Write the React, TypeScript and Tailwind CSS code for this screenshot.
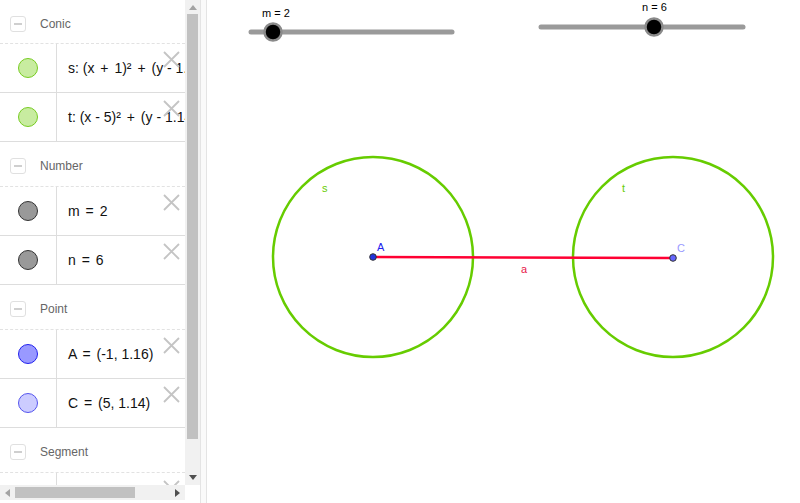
import React from "react";

type Row = { swatch: string; label: React.ReactNode };
type Group = { name: string; rows: Row[] };

// math operators get a bit more room, like the algebra view's formula renderer
const Op = ({ c }: { c: string }) => <span className="mx-[2px]">{c}</span>;

const groups: Group[] = [
  {
    name: "Conic",
    rows: [
      {
        swatch: "bg-[#c8eca0] border-[#77cc22]",
        label: <>s: (x <Op c="+" /> 1)² <Op c="+" /> (y - 1.16)² <Op c="=" /> 10000</>,
      },
      {
        swatch: "bg-[#c8eca0] border-[#77cc22]",
        label: <>t: (x - 5)² <Op c="+" /> (y - 1.14)² <Op c="=" /> 10000</>,
      },
    ],
  },
  {
    name: "Number",
    rows: [
      { swatch: "bg-[#999999] border-[#333333]", label: <>m <Op c="=" /> 2</> },
      { swatch: "bg-[#999999] border-[#333333]", label: <>n <Op c="=" /> 6</> },
    ],
  },
  {
    name: "Point",
    rows: [
      { swatch: "bg-[#9999ff] border-[#2222ee]", label: <>A <Op c="=" /> (-1, 1.16)</> },
      { swatch: "bg-[#ccccff] border-[#5555ee]", label: <>C <Op c="=" /> (5, 1.14)</> },
    ],
  },
  {
    name: "Segment",
    rows: [{ swatch: "bg-[#ff8899] border-[#ee1144]", label: null }],
  },
];

function DeleteX() {
  return (
    <svg className="absolute left-[163px] top-[7px]" width="17" height="17" viewBox="0 0 17 17">
      <path d="M1 1L16 16M16 1L1 16" stroke="#c4c4c4" strokeWidth="1.8" />
    </svg>
  );
}

function GroupHeader({ name, first }: { name: string; first: boolean }) {
  return (
    <div
      className={`${first ? "h-[44px]" : "h-[45px]"} flex items-center pt-[4px] border-b border-dashed border-[#e2e2e2]`}
    >
      <div className="ml-[10px] w-[16px] h-[16px] border border-[#e0e0e0] rounded-[3px] flex items-center justify-center">
        <div className="w-[8px] h-[2px] bg-[#cfcfcf]" />
      </div>
      <span className="ml-[14px] text-[12px] text-[#666666]">{name}</span>
    </div>
  );
}

function AlgebraRow({ row }: { row: Row }) {
  return (
    <div className="relative h-[49px] flex border-b border-[#dddddd]">
      <div className="w-[57px] shrink-0 border-r border-[#dddddd] flex items-center justify-center">
        <div className={`w-[20px] h-[20px] rounded-full border ${row.swatch}`} />
      </div>
      <div className="flex items-center pl-[11px] text-[14px] text-[#111111] whitespace-nowrap">
        <span>{row.label}</span>
      </div>
      <DeleteX />
    </div>
  );
}

function Arrow({ dir, dark }: { dir: "up" | "down" | "left" | "right"; dark?: boolean }) {
  const c = dark ? "#505050" : "#a3a3a3";
  const pts = {
    up: "0,5 4,0 8,5",
    down: "0,0 8,0 4,5",
    left: "5,0 5,8 0,4",
    right: "0,0 0,8 5,4",
  }[dir];
  const vertical = dir === "up" || dir === "down";
  return (
    <svg width={vertical ? 8 : 5} height={vertical ? 5 : 8}>
      <polygon points={pts} fill={c} />
    </svg>
  );
}

function Graphics() {
  return (
    <svg className="block" width="593" height="503" viewBox="207 0 593 503">
      <g fontFamily="'Liberation Sans', Arial, sans-serif">
        {/* slider m */}
        <text x="262" y="17" fontSize="11" fill="#000">m = 2</text>
        <line x1="251" y1="32" x2="452" y2="32" stroke="#9a9a9a" strokeWidth="5" strokeLinecap="round" />
        <circle cx="273" cy="32" r="8.5" fill="#000" stroke="#8a8a8a" strokeWidth="2.5" />
        {/* slider n */}
        <text x="642" y="11" fontSize="11" fill="#000">n = 6</text>
        <line x1="541" y1="27" x2="743" y2="27" stroke="#9a9a9a" strokeWidth="5" strokeLinecap="round" />
        <circle cx="654" cy="27" r="8.5" fill="#000" stroke="#8a8a8a" strokeWidth="2.5" />

        {/* circles */}
        <circle cx="373" cy="257" r="100" fill="none" stroke="#66cc00" strokeWidth="2.5" />
        <circle cx="673" cy="257" r="100" fill="none" stroke="#66cc00" strokeWidth="2.5" />
        <text x="322" y="192" fontSize="11" fill="#66cc00">s</text>
        <text x="622" y="192" fontSize="11" fill="#66cc00">t</text>

        {/* segment */}
        <line x1="373" y1="257" x2="673" y2="258" stroke="#ff0033" strokeWidth="2.5" />
        <text x="521" y="273" fontSize="11" fill="#e8164a">a</text>

        {/* points */}
        <circle cx="373" cy="257" r="3.3" fill="#2233dd" stroke="#333" strokeWidth="1" />
        <text x="377" y="251" fontSize="11" fill="#2222ee">A</text>
        <circle cx="673" cy="258" r="3.3" fill="#6666ff" stroke="#333" strokeWidth="1" />
        <text x="677" y="252" fontSize="11" fill="#9999ff">C</text>
      </g>
    </svg>
  );
}

export default function App() {
  return (
    <div className="w-[800px] h-[503px] flex bg-white overflow-hidden font-['Liberation_Sans',Arial,sans-serif]">
      {/* algebra view */}
      <div className="w-[200px] shrink-0 flex flex-col">
        <div className="h-[485px] flex">
          <div className="w-[185px] overflow-hidden">
            {groups.map((g, gi) => (
              <div key={g.name}>
                <GroupHeader name={g.name} first={gi === 0} />
                {g.rows.map((r, ri) => (
                  <AlgebraRow key={ri} row={r} />
                ))}
              </div>
            ))}
          </div>
          <div className="w-[15px] bg-[#f1f1f1] flex flex-col items-center">
            <div className="h-[14px] flex items-center justify-center">
              <Arrow dir="up" />
            </div>
            <div className="w-[11px] h-[425px] bg-[#c1c1c1]" />
            <div className="flex-1" />
            <div className="h-[16px] flex items-center justify-center">
              <Arrow dir="down" dark />
            </div>
          </div>
        </div>
        <div className="h-[15px] flex">
          <div className="w-[185px] bg-[#f1f1f1] flex items-center">
            <div className="w-[15px] flex justify-center">
              <Arrow dir="left" />
            </div>
            <div className="w-[120px] h-[11px] bg-[#c1c1c1]" />
            <div className="flex-1" />
            <div className="w-[15px] flex justify-center">
              <Arrow dir="right" dark />
            </div>
          </div>
          <div className="flex-1 bg-white" />
        </div>
      </div>
      {/* splitter */}
      <div className="w-[7px] shrink-0 border-l border-r border-[#e4e4e4] bg-[#fafafa]" />
      {/* graphics view */}
      <div className="flex-1">
        <Graphics />
      </div>
    </div>
  );
}
